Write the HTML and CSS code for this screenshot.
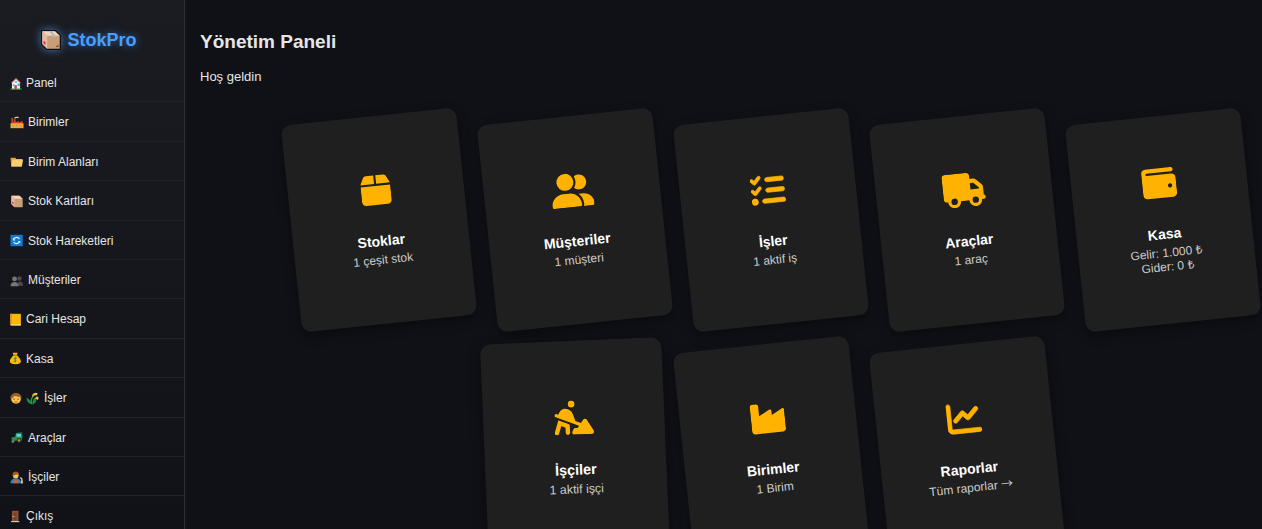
FILE: index.html
```html
<!DOCTYPE html>
<html lang="tr">
<head>
    <meta charset="UTF-8">
    <meta name="viewport" content="width=device-width, initial-scale=1.0">
    <title>StokPro</title>
    <link rel="stylesheet" href="styles.css">
</head>
<body>
    <aside class="sidebar">
        <h2 class="logo">
            <svg class="logo-icon" viewBox="0 0 16 16" aria-hidden="true">
                <path d="M.5.5h11l4 4v11h-11l-4-4z" fill="#c99e76" stroke="#111" stroke-width="1"/>
                <path d="M1 1h10l4 3.500H5z" fill="#f3d3bd"/>
                <path d="M1 1l4 3.500V15l-4-4z" fill="#e5b9a2"/>
                <path d="M6.500 1h2l3 3.500v1.500H9.500V4.500z" fill="#a9b8bd"/>
                <path d="M2 8.500l1.500 1v2.500L2 10.500z" fill="#e0283c"/>
                <path d="M11.500 13.500h2.500v-2z" fill="#70543b"/>
            </svg>
            <span>StokPro</span>
        </h2>
        <nav class="menu">
            <a href="#">
                <svg class="narrow" viewBox="0 0 14 16" aria-hidden="true">
                    <path d="M2 7l5-5 5 5v8H2z" fill="#eef0f2"/>
                    <path d="M1 7.500l6-6 6 6" fill="none" stroke="#d84a4a" stroke-width="1.200"/>
                    <path d="M6 5h2v2H6zM3 9h2v2H3zM9 8h3v3H9z" fill="#32bdf0"/>
                    <path d="M5 10h3v5H5z" fill="#c64a3c"/>
                    <path d="M0 14h5v1.500H0zM8 14h6v1.500H8z" fill="#25a83c"/>
                </svg>
                Panel
            </a>
            <a href="#">
                <svg viewBox="0 0 16 16" aria-hidden="true">
                    <path d="M1 2h2l.5 8H1zM4 3h2l.5 7H4z" fill="#a8483e"/>
                    <path d="M1 9l5-3v2l4-2v2l5-2v4H1z" fill="#e8432f"/>
                    <path d="M0 9h16v6H0z" fill="#ffa51f"/>
                    <path d="M2 11h2v2H2zM7 11h2v2H7zM12 11h2v2h-2z" fill="#35c5f0"/>
                    <path d="M5 2.500c2-2 4 0 5-1" fill="none" stroke="#ccc" stroke-width="1.500"/>
                </svg>
                Birimler
            </a>
            <a href="#">
                <svg viewBox="0 0 16 16" aria-hidden="true">
                    <path d="M0 3.500h6l1 1.500h7V14H1z" fill="#e5a02f"/>
                    <path d="M2.500 5.500h13L14 14H1z" fill="#ffcd6b"/>
                </svg>
                Birim Alanları
            </a>
            <a href="#">
                <svg viewBox="0 0 16 16" aria-hidden="true">
                    <path d="M1 1h10l4 3.500V15H5l-4-4z" fill="#c99e76"/>
                    <path d="M1 1h10l4 3.500H5z" fill="#f3d3bd"/>
                    <path d="M1 1l4 3.500V15l-4-4z" fill="#e5b9a2"/>
                    <path d="M2 8l2 1.500v2L2 10z" fill="#e0283c"/>
                </svg>
                Stok Kartları
            </a>
            <a href="#">
                <svg viewBox="0 0 16 16" aria-hidden="true">
                    <path d="M0 1h15v14H0z" fill="#0f7bd8"/>
                    <path d="M4 6.500A4 4 0 0 1 11 6M11 9.500A4 4 0 0 1 4 10" fill="none" stroke="#e9f5ff" stroke-width="1.400"/>
                    <path d="M3 4.500v3.500h3zM12 11.500V8.500H9z" fill="#e9f5ff"/>
                </svg>
                Stok Hareketleri
            </a>
            <a href="#">
                <svg viewBox="0 0 16 16" aria-hidden="true">
                    <circle cx="11" cy="5.500" r="2.700" fill="#4b4b4b"/>
                    <path d="M8 14.500c0-7 7.500-7 7.500 0z" fill="#4b4b4b"/>
                    <circle cx="5" cy="6" r="3" fill="#777"/>
                    <path d="M0 15c0-7 10-7 10 0z" fill="#777"/>
                </svg>
                Müşteriler
            </a>
            <a href="#">
                <svg class="narrow" viewBox="0 0 14 16" aria-hidden="true">
                    <path d="M0 1h13v14H0z" fill="#ffb900"/>
                    <path d="M0 1h2v14H0z" fill="#e8912d"/>
                    <path d="M1 14h12v1.500H1z" fill="#f1e1b6"/>
                </svg>
                Cari Hesap
            </a>
            <a href="#">
                <svg class="narrow" viewBox="0 0 14 16" aria-hidden="true">
                    <path d="M3 1h6L8 4c7 6 7 11-2 11S-2 10 4 4z" fill="#ffb900"/>
                    <path d="M3.500 4h5" stroke="#a86b18" stroke-width="1.300"/>
                    <path d="M8 7.500c-3-1-4 1-2 2s1 3-2 2M6 6v7" fill="none" stroke="#34933b" stroke-width="1.200"/>
                </svg>
                Kasa
            </a>
            <a href="#">
                <svg class="narrow" viewBox="0 0 14 16" aria-hidden="true">
                    <circle cx="7" cy="8.500" r="6" fill="#ffc34c"/>
                    <path d="M0 8C0-1 14-1 14 8l-2-2-7-1-3 3z" fill="#9c5c32"/>
                    <path d="M4.500 8v1.500M9.500 8v1.500" stroke="#553820" stroke-width="1.300"/>
                    <path d="M5 12q2 1 4 0" fill="none" stroke="#a3532a"/>
                </svg>
                <svg viewBox="0 0 16 16" aria-hidden="true">
                    <path d="M6 15C5 8 7 4 13 3M8 15C8 10 10 7 14 8" fill="none" stroke="#22a13a" stroke-width="1.600"/>
                    <path d="M6 15C6 11 4 9 0 7c0 4 2 7 6 8zM8 15c0-4 2-5 4-6 0 3-1 5-4 6z" fill="#159447"/>
                    <path d="M7 4c1-3 5-4 7-2l-2 2c-2-1-3 0-5 2zM11 7c1-2 3-2 4 0l-1 3c-1-1-2-1-3-1z" fill="#f1bd48"/>
                </svg>
                İşler
            </a>
            <a href="#">
                <svg viewBox="0 0 16 16" aria-hidden="true">
                    <path d="M7 3h6l1 5H6z" fill="#68cde8"/>
                    <path d="M7 8V3l7-1v7" fill="none" stroke="#169447"/>
                    <path d="M1 8l6-1h7v5H2z" fill="#1c9845"/>
                    <circle cx="10.500" cy="11.500" r="3" fill="#3c3b30"/>
                    <circle cx="10.500" cy="11.500" r="1.300" fill="#d2a42f"/>
                    <circle cx="3" cy="13" r="1.800" fill="#777"/>
                </svg>
                Araçlar
            </a>
            <a href="#">
                <svg viewBox="0 0 16 16" aria-hidden="true">
                    <path d="M0 15c0-8 13-8 13 0z" fill="#2387d8"/>
                    <path d="M4 11h5l1 4H3z" fill="#c7652b"/>
                    <circle cx="6.500" cy="5.500" r="3.500" fill="#ffc34c"/>
                    <path d="M2.500 6c-1-7 9-7 8 0L8 4z" fill="#9c5c32"/>
                    <path d="M12 8l2 2v5" fill="none" stroke="#d7dadd" stroke-width="1.500"/>
                    <path d="M14 12v3.500" stroke="#ffc34c" stroke-width="2"/>
                </svg>
                İşçiler
            </a>
            <a href="#">
                <svg class="narrow" viewBox="0 0 14 16" aria-hidden="true">
                    <path d="M2 1h8v13H2z" fill="#915336"/>
                    <path d="M4 3h4v4H4zM4 9h4v4H4z" fill="#74402b"/>
                    <path d="M1 13.500h10V15H1z" fill="#c5c5c5"/>
                    <circle cx="3.500" cy="8" r=".8" fill="#ffc34c"/>
                </svg>
                Çıkış
            </a>
        </nav>
    </aside>

    <main class="content">
        <h1>Yönetim Paneli</h1>
        <p class="welcome">Hoş geldin</p>

        <div class="cards">
            <a href="#" class="card">
                <svg viewBox="0 0 448 512" aria-hidden="true"><path d="M50.7 58.5L0 160H208V32H93.7C75.5 32 58.9 42.3 50.7 58.5zM240 160H448L397.3 58.5C389.1 42.3 372.5 32 354.3 32H240V160zm208 32H0V416c0 35.3 28.7 64 64 64H384c35.3 0 64-28.7 64-64V192z"/></svg>
                <h3>Stoklar</h3>
                <p>1 çeşit stok</p>
            </a>
            <a href="#" class="card">
                <svg viewBox="0 0 640 512" aria-hidden="true"><path d="M96 128a128 128 0 1 1 256 0A128 128 0 1 1 96 128zM0 482.3C0 383.8 79.8 304 178.3 304h91.4C368.2 304 448 383.8 448 482.3c0 16.4-13.3 29.7-29.7 29.7H29.7C13.3 512 0 498.7 0 482.3zM609.3 512H471.4c5.4-9.4 8.6-20.3 8.6-32v-8c0-60.7-27.1-115.2-69.8-151.8c2.4-.1 4.7-.2 7.1-.2h61.4C567.8 320 640 392.2 640 481.3c0 17-13.8 30.7-30.7 30.7zM432 256c-31 0-59-12.6-79.3-32.9C372.4 196.5 384 163.6 384 128c0-26.8-6.6-52.1-18.3-74.3C384.3 40.1 407.2 32 432 32c61.9 0 112 50.1 112 112s-50.1 112-112 112z"/></svg>
                <h3>Müşteriler</h3>
                <p>1 müşteri</p>
            </a>
            <a href="#" class="card">
                <svg class="bold" viewBox="0 0 512 512" aria-hidden="true"><path d="M152.1 38.2c9.9 8.9 10.7 24 1.8 33.9l-72 80c-4.4 4.9-10.6 7.8-17.2 7.9s-12.9-2.4-17.6-7L7 113C-2.3 103.6-2.3 88.4 7 79s24.6-9.4 33.9 0l22.1 22.1 55.1-61.2c8.9-9.9 24-10.7 33.9-1.8zm0 160c9.9 8.9 10.7 24 1.8 33.9l-72 80c-4.4 4.9-10.6 7.8-17.2 7.9s-12.9-2.4-17.6-7L7 273c-9.4-9.4-9.4-24.6 0-33.9s24.6-9.4 33.9 0l22.1 22.1 55.1-61.2c8.9-9.9 24-10.7 33.9-1.8zM224 96c0-17.7 14.3-32 32-32H480c17.7 0 32 14.3 32 32s-14.3 32-32 32H256c-17.7 0-32-14.3-32-32zm0 160c0-17.7 14.3-32 32-32H480c17.7 0 32 14.3 32 32s-14.3 32-32 32H256c-17.7 0-32-14.3-32-32zM160 416c0-17.7 14.3-32 32-32H480c17.7 0 32 14.3 32 32s-14.3 32-32 32H192c-17.7 0-32-14.3-32-32zM48 368a48 48 0 1 1 0 96 48 48 0 1 1 0-96z"/></svg>
                <h3>İşler</h3>
                <p>1 aktif iş</p>
            </a>
            <a href="#" class="card">
                <svg viewBox="0 0 640 512" aria-hidden="true"><path d="M48 0C21.5 0 0 21.5 0 48V368c0 26.5 21.5 48 48 48H64c0 53 43 96 96 96s96-43 96-96H384c0 53 43 96 96 96s96-43 96-96h32c17.7 0 32-14.3 32-32s-14.3-32-32-32V288 256 237.3c0-17-6.7-33.3-18.7-45.3L512 114.7c-12-12-28.3-18.7-45.3-18.7H416V48c0-26.5-21.5-48-48-48H48zM416 160h50.7L544 237.3V256H416V160zM112 416a48 48 0 1 1 96 0 48 48 0 1 1 -96 0zm368-48a48 48 0 1 1 0 96 48 48 0 1 1 0-96z"/></svg>
                <h3>Araçlar</h3>
                <p>1 araç</p>
            </a>
            <a href="#" class="card">
                <svg viewBox="0 0 512 512" aria-hidden="true"><path d="M64 32C28.7 32 0 60.7 0 96V416c0 35.3 28.7 64 64 64H448c35.3 0 64-28.7 64-64V192c0-35.3-28.7-64-64-64H80c-8.8 0-16-7.2-16-16s7.2-16 16-16H448c17.7 0 32-14.3 32-32s-14.3-32-32-32H64zM416 272a32 32 0 1 1 0 64 32 32 0 1 1 0-64z"/></svg>
                <h3>Kasa</h3>
                <p>Gelir: 1.000 ₺<br>Gider: 0 ₺</p>
            </a>
            <a href="#" class="card active">
                <svg viewBox="0 0 576 512" aria-hidden="true"><path d="M208 64a48 48 0 1 1 96 0 48 48 0 1 1 -96 0zM9.8 214.8c5.1-12.2 19.1-18 31.4-12.9L60.7 210l22.9-38.1C99.9 144.6 129.3 128 161 128c51.4 0 97 32.9 113.3 81.7l34.6 103.7 79.3 33.1 34.2-45.6c6.4-8.5 16.6-13.3 27.2-12.8s20.3 6.4 25.8 15.5l96 160c5.9 9.9 6.1 22.2 .4 32.2s-16.3 16.2-27.8 16.2H288c-11.1 0-21.4-5.7-27.2-15.2s-6.4-21.2-1.4-31.1l16-32c5.4-10.8 16.5-17.7 28.6-17.7h32l22.5-30L22.8 246.2c-12.2-5.1-18-19.1-12.9-31.4zm82.8 91.8l112 48c11.8 5 19.4 16.6 19.4 29.4v96c0 17.7-14.3 32-32 32s-32-14.3-32-32V405.1l-60.6-26-37 111c-5.6 16.8-23.7 25.8-40.5 20.2S-3.9 486.6 1.6 469.9l48-144 11-33 32 13.7z"/></svg>
                <h3>İşçiler</h3>
                <p>1 aktif işçi</p>
            </a>
            <a href="#" class="card">
                <svg viewBox="0 0 512 512" aria-hidden="true"><path d="M32 32C14.3 32 0 46.3 0 64V304v48 80c0 26.5 21.5 48 48 48H464c26.5 0 48-21.5 48-48V304 152.2c0-18.2-19.4-29.7-35.4-21.1L320 215.4V152.2c0-18.2-19.4-29.7-35.4-21.1L128 215.4V64c0-17.7-14.3-32-32-32H32z"/></svg>
                <h3>Birimler</h3>
                <p>1 Birim</p>
            </a>
            <a href="#" class="card">
                <svg class="bold" viewBox="0 0 512 512" aria-hidden="true"><path d="M64 64c0-17.7-14.3-32-32-32S0 46.3 0 64V400c0 44.2 35.8 80 80 80H480c17.7 0 32-14.3 32-32s-14.3-32-32-32H80c-8.8 0-16-7.2-16-16V64zm406.6 86.6c12.5-12.5 12.5-32.8 0-45.3s-32.8-12.5-45.3 0L320 210.7l-57.4-57.4c-12.5-12.5-32.8-12.5-45.3 0l-112 112c-12.5 12.5-12.5 32.8 0 45.3s32.8 12.5 45.3 0L240 221.3l57.4 57.4c12.5 12.5 32.8 12.5 45.3 0l128-128z"/></svg>
                <h3>Raporlar</h3>
                <p>Tüm raporlar <span class="arrow">→</span></p>
            </a>
        </div>
    </main>
</body>
</html>
```

FILE: styles.css
```css
* {
    margin: 0;
    padding: 0;
    box-sizing: border-box;
}

body {
    display: flex;
    height: 100vh;
    overflow: hidden;
    font-family: "Liberation Sans", Arial, sans-serif;
    background-color: #0f1117;
    color: #e6e6e6;
}

a {
    color: inherit;
    text-decoration: none;
}

/* Sidebar */
.sidebar {
    flex: 0 0 185px;
    overflow: hidden;
    background: linear-gradient(180deg, #1a1c21, #111217);
    border-right: 1px solid #2c2e33;
}

.logo {
    display: flex;
    justify-content: center;
    align-items: center;
    gap: 6px;
    padding: 28px 6px 11px 0;
    font-size: 18px;
    line-height: 24px;
    color: #4a9eff;
    text-shadow: 0 0 8px rgba(74, 158, 255, 0.6);
}

.logo-icon {
    width: 20px;
    height: 20px;
    filter: drop-shadow(0 0 4px rgba(74, 158, 255, 0.7));
}

.menu a {
    display: flex;
    align-items: center;
    gap: 4px;
    padding: 13px 10px 11px;
    border-bottom: 1px solid #202228;
    font-size: 12px;
    line-height: 1.2;
}

.menu svg {
    width: 14px;
    height: 13px;
}

.menu .narrow {
    width: 12px;
}

.menu a:hover {
    background-color: #22242a;
}

/* Content */
.content {
    flex: 1;
    min-width: 0;
    padding: 31px 0 20px 15px;
    overflow-x: hidden;
    overflow-y: auto;
    scrollbar-width: none;
}

h1 {
    margin-bottom: 16px;
    font-size: 19px;
    line-height: 22px;
}

.welcome {
    font-size: 13px;
    line-height: 16px;
}

.cards {
    display: flex;
    flex-wrap: wrap;
    justify-content: center;
    gap: 20px;
    margin-top: 31px;
    padding-left: 80px;
}

.card {
    display: flex;
    flex-direction: column;
    align-items: center;
    justify-content: center;
    width: 176px;
    min-height: 208px;
    border-radius: 10px;
    background-color: #1f1f1f;
    box-shadow: 0 4px 12px rgba(0, 0, 0, 0.4);
    text-align: center;
    transform: rotate(-6deg);
    transition: transform 0.3s;
}

.card.active,
.card:hover {
    transform: rotate(-2.4deg) scale(1.03);
}

.card svg {
    height: 34px;
    margin-bottom: 26px;
    fill: #ffb300;
}

/* thin line icons */
.card .bold {
    stroke: #ffb300;
    stroke-width: 10;
}

.card h3 {
    margin-bottom: 4px;
    font-size: 14px;
    line-height: 16px;
    color: #fff;
}

.card p {
    font-size: 12px;
    line-height: 14px;
    color: #ccc;
}

.arrow {
    font-family: "Noto Sans CJK JP", sans-serif;
    line-height: 1;
}
```
